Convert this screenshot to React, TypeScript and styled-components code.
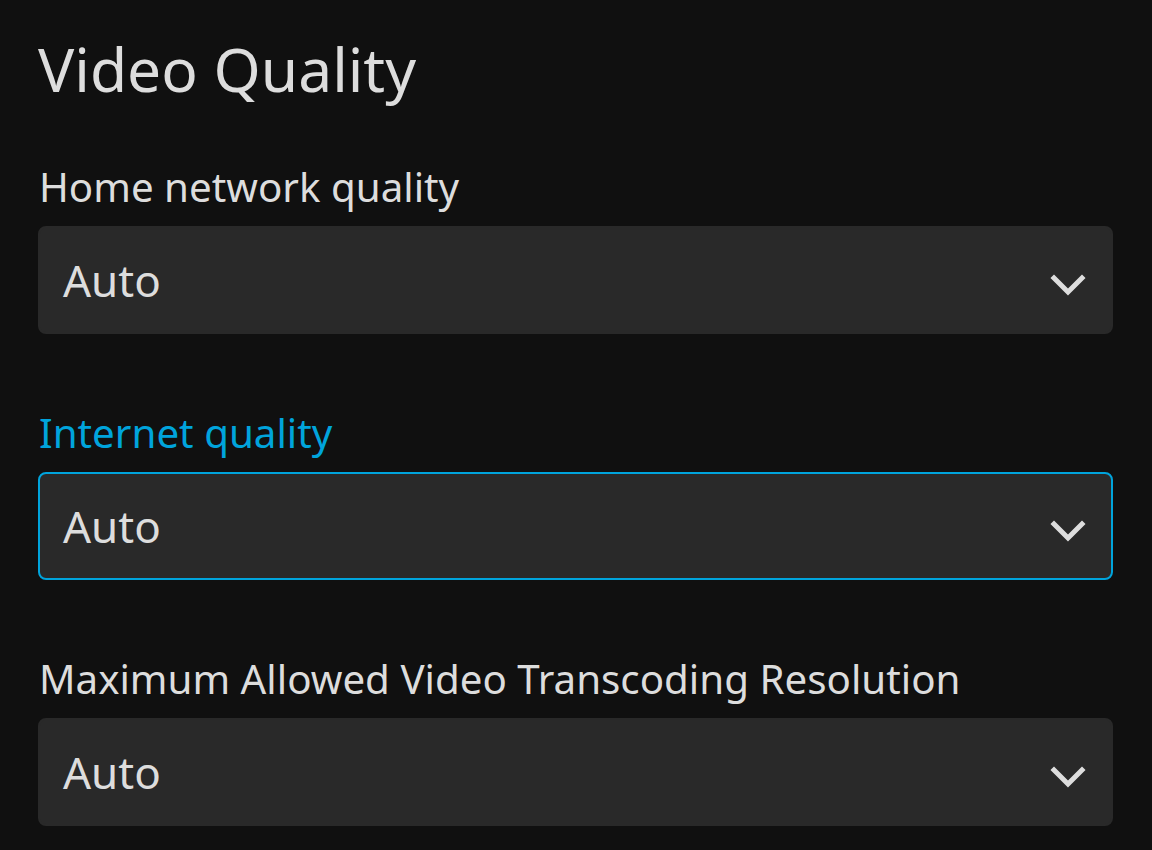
import styled, { createGlobalStyle } from "styled-components";

const GlobalStyle = createGlobalStyle`
  html, body {
    margin: 0;
    padding: 0;
    background: #101010;
  }
  body {
    font-family: "Noto Sans", "Open Sans", sans-serif;
    color: #dddddd;
  }
`;

const fields = [
  { label: "Home network quality", value: "Auto", focused: false },
  { label: "Internet quality", value: "Auto", focused: true },
  { label: "Maximum Allowed Video Transcoding Resolution", value: "Auto", focused: false },
];

const Chevron = () => (
  <svg width="36" height="24" viewBox="0 0 36 24" fill="none">
    <polyline
      points="4,5 18,19 32,5"
      stroke="#dddddd"
      strokeWidth="5"
      strokeLinecap="square"
      strokeLinejoin="miter"
    />
  </svg>
);

const App = () => {
  return (
    <>
      <GlobalStyle />
      <Page>
        <Title>Video Quality</Title>
        {fields.map((field, index) => (
          <Field key={index}>
            <Label $focused={field.focused}>{field.label}</Label>
            <Select $focused={field.focused}>
              <Value>{field.value}</Value>
              <Arrow>
                <Chevron />
              </Arrow>
            </Select>
          </Field>
        ))}
      </Page>
    </>
  );
};

const Page = styled.div`
  padding: 32px 39px 0 38px;
`;

const Title = styled.h2`
  margin: 0 0 56px;
  font-size: 60.5px;
  line-height: 74px;
  font-weight: 400;
  color: #dddddd;
`;

const Field = styled.div`
  display: flex;
  flex-direction: column;
  gap: 14px;
  margin-bottom: 74px;
`;

const Label = styled.label<{ $focused: boolean }>`
  font-size: 40.3px;
  line-height: 50px;
  padding-left: 1px;
  color: ${(p) => (p.$focused ? "#00a4dc" : "#dddddd")};
`;

const Select = styled.div<{ $focused: boolean }>`
  box-sizing: border-box;
  height: 108px;
  display: flex;
  align-items: center;
  justify-content: space-between;
  padding: 0 25px 0 23px;
  background: #292929;
  border-radius: 8px;
  border: 2px solid ${(p) => (p.$focused ? "#00a4dc" : "#292929")};
`;

const Value = styled.span`
  font-size: 44px;
  line-height: 54px;
  color: #dddddd;
`;

const Arrow = styled.span`
  display: flex;
  margin-top: 10px;
`;

export default App;
